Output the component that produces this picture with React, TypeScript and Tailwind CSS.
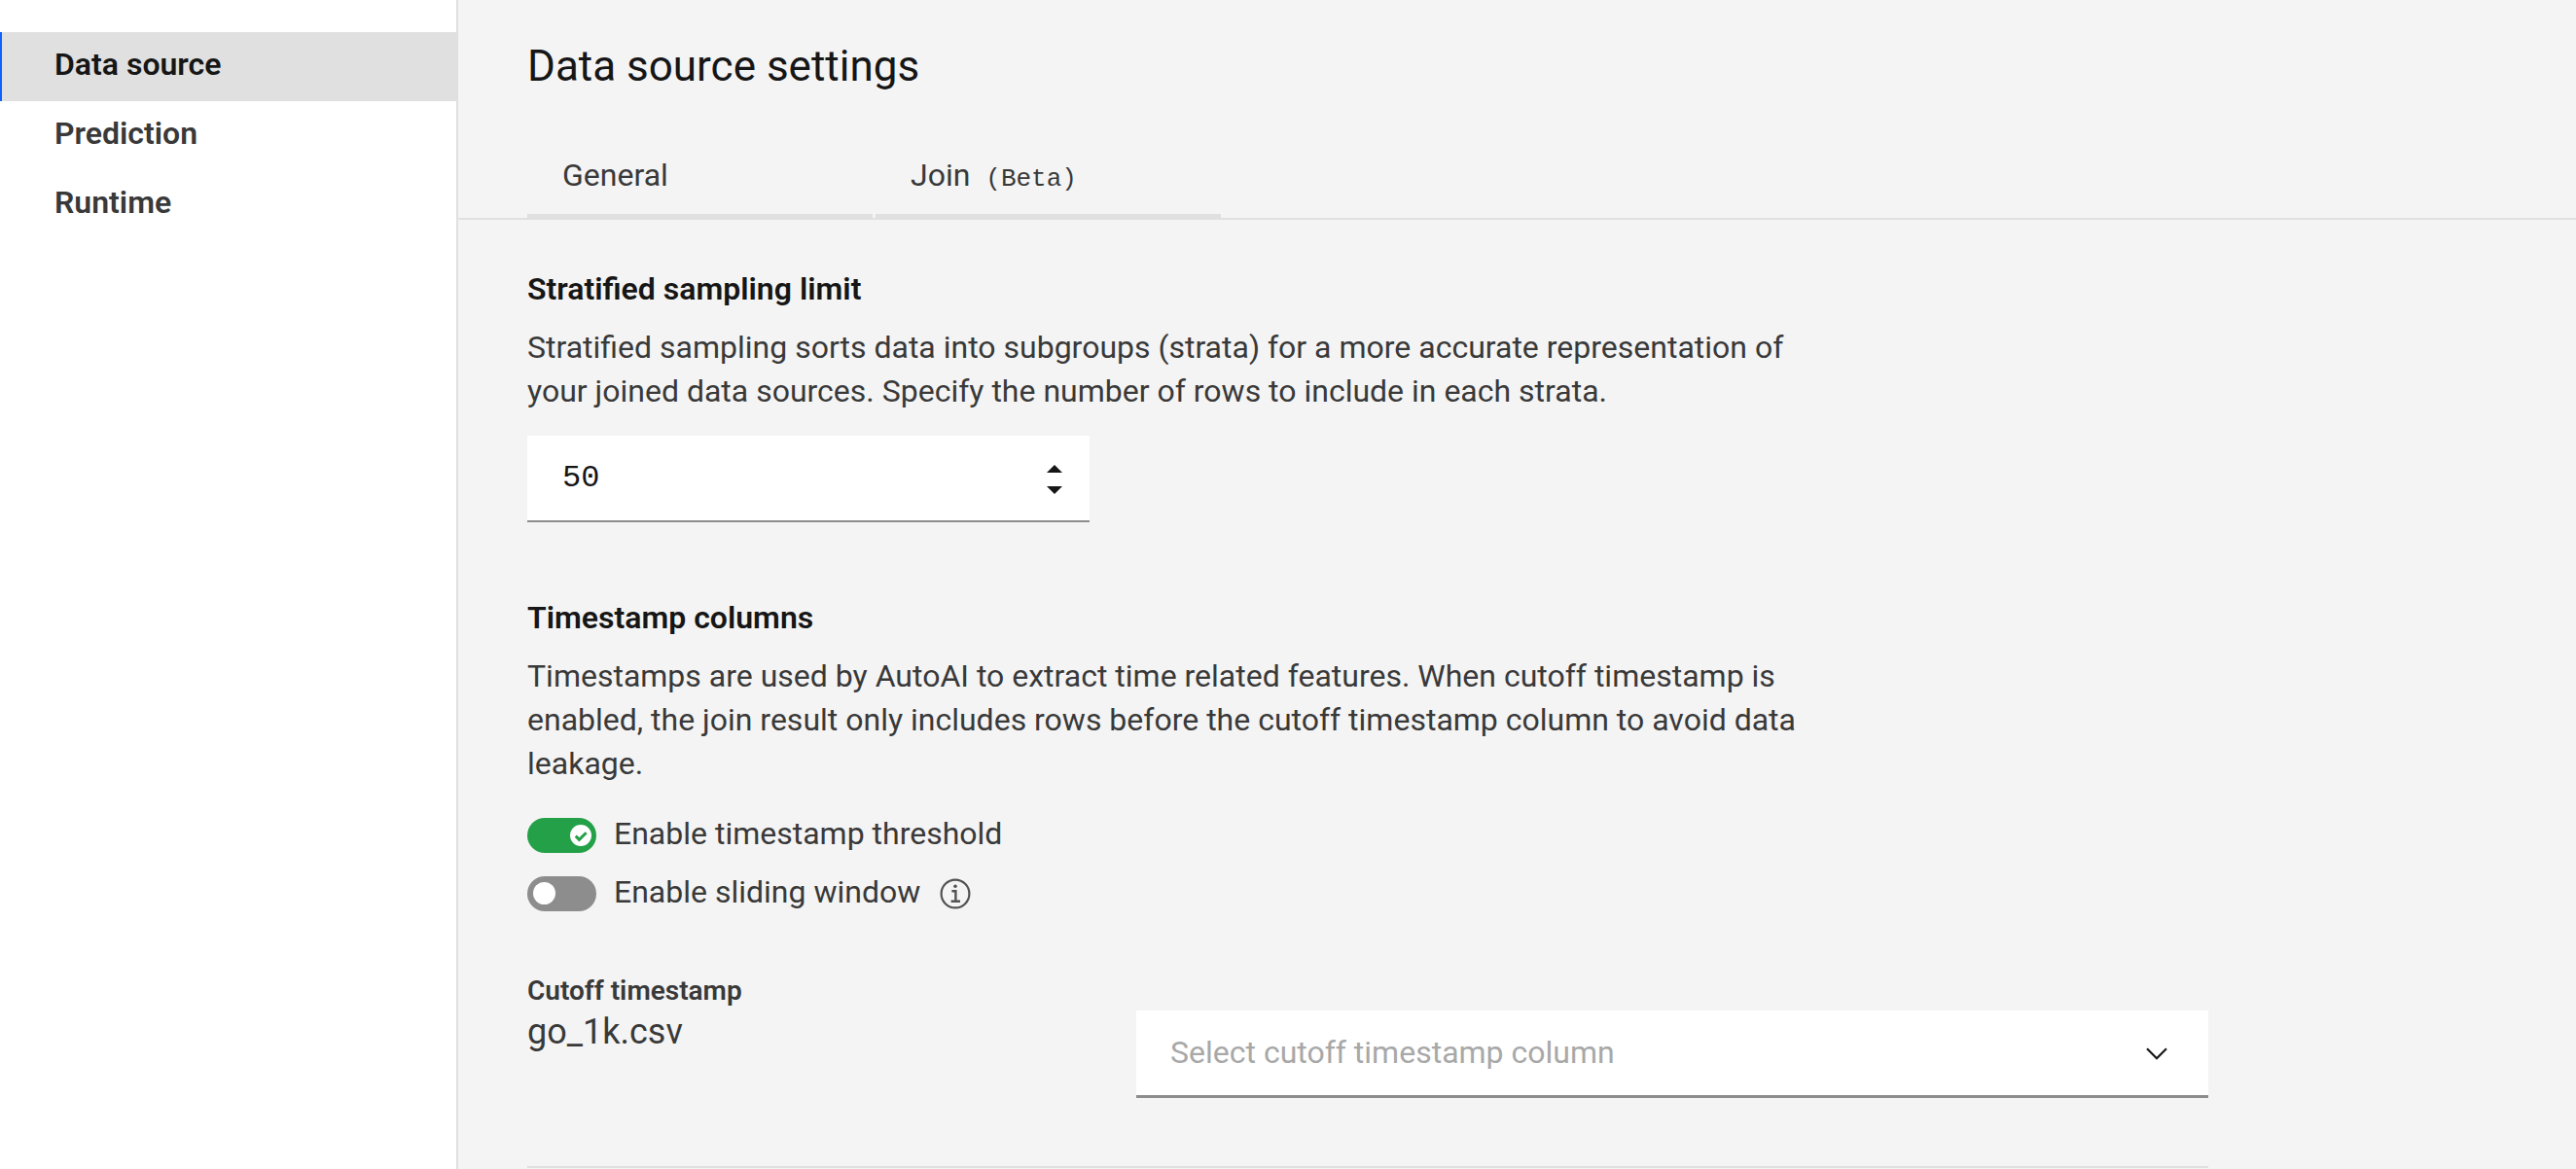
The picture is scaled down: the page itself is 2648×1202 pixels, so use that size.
import React, { useState } from 'react';
import clsx from 'clsx';

const NAV_ITEMS = ['Data source', 'Prediction', 'Runtime'];

function SideNav() {
  const [active, setActive] = useState(NAV_ITEMS[0]);
  return (
    <nav aria-label="Settings sections" className="w-[471px] shrink-0 border-r-2 border-[#e0e0e0] bg-white pt-[33px]">
      <ul>
        {NAV_ITEMS.map((item) => (
          <li key={item}>
            <button
              type="button"
              aria-current={item === active ? 'page' : undefined}
              onClick={() => setActive(item)}
              className={clsx(
                'block w-full border-l-2 pt-[13px] pb-[18px] pl-[54px] text-left text-[32px] leading-10 font-semibold',
                item === active
                  ? 'border-[#0f62fe] bg-[#e0e0e0] text-[#161616]'
                  : 'border-transparent text-[#393939]',
              )}
            >
              {item}
            </button>
          </li>
        ))}
      </ul>
    </nav>
  );
}

function Header() {
  const tab =
    'w-[355px] border-b-4 border-[#e0e0e0] pt-6 pb-5 pl-9 text-left text-[32px] leading-10 text-[#393939]';
  return (
    <header className="border-b-2 border-[#e0e0e0] pt-10 pl-[71px]">
      <h1 className="text-[44px] leading-[56px]">Data source settings</h1>
      <div role="tablist" className="mt-10 flex gap-[3px]">
        <button type="button" role="tab" className={tab}>
          General
        </button>
        <button type="button" role="tab" className={tab}>
          Join{' '}
          <span className="ml-2 font-['Liberation_Mono',monospace] text-[26px] leading-none">(Beta)</span>
        </button>
      </div>
    </header>
  );
}

function NumberField() {
  const [value, setValue] = useState(50);
  return (
    <div className="mt-[23px] flex w-[578px] items-stretch border-b-2 border-[#8d8d8d] bg-white">
      <input
        type="number"
        aria-labelledby="sampling-heading"
        value={value}
        onChange={(e) => setValue(Number(e.target.value))}
        className="h-[87px] min-w-0 flex-1 bg-transparent pl-9 font-['Liberation_Mono',monospace] text-[32px] text-[#161616] outline-none [appearance:textfield] [&::-webkit-inner-spin-button]:appearance-none"
      />
      <div className="mr-5 flex w-8 flex-col items-center justify-center gap-[14px] pt-[3px]">
        <button type="button" aria-label="Increment" onClick={() => setValue(value + 1)}>
          <svg width="16" height="8" viewBox="0 0 16 8" className="block" aria-hidden="true">
            <path d="M0 8 8 0l8 8z" fill="#161616" />
          </svg>
        </button>
        <button type="button" aria-label="Decrement" onClick={() => setValue(value - 1)}>
          <svg width="16" height="8" viewBox="0 0 16 8" className="block" aria-hidden="true">
            <path d="M0 0h16L8 8z" fill="#161616" />
          </svg>
        </button>
      </div>
    </div>
  );
}

function Toggle({ label, initial }: { label: string; initial: boolean }) {
  const [on, setOn] = useState(initial);
  return (
    <label className="flex items-start gap-[18px] text-[32px] leading-8 text-[#393939]">
      <span className="relative block h-9 w-[71px]">
        <input
          type="checkbox"
          role="switch"
          checked={on}
          onChange={() => setOn(!on)}
          className="block h-9 w-full appearance-none rounded-full bg-[#8d8d8d] checked:bg-[#24a148]"
        />
        <span
          className={clsx(
            'pointer-events-none absolute flex items-center justify-center rounded-full bg-white',
            on ? 'top-[7px] right-[5px] size-[22px]' : 'top-[6px] left-[6px] size-[23px]',
          )}
        >
          {on && (
            <svg width="22" height="22" viewBox="0 0 22 22" fill="none" aria-hidden="true">
              <path d="M5.8 11.6 9.4 15.4 16.6 8.2" stroke="#24a148" strokeWidth="3" />
            </svg>
          )}
        </span>
      </span>
      {label}
    </label>
  );
}

function InfoButton() {
  return (
    <button type="button" aria-label="More information">
      <svg width="32" height="32" viewBox="0 0 32 32" fill="none" stroke="#525252" className="block" aria-hidden="true">
        <circle cx="16" cy="16" r="14.4" strokeWidth="2.2" />
        <circle cx="16" cy="8.2" r="1.8" fill="#525252" stroke="none" />
        <path d="M12.4 13.3H16.4V23.8M11.6 23.8H21" strokeWidth="2.4" />
      </svg>
    </button>
  );
}

function CutoffRow() {
  return (
    <div className="mt-[62px] grid max-w-[1728px] grid-cols-[626px_1fr] items-start border-b-2 border-[#e0e0e0] pb-[70px] text-[#393939]">
      <label htmlFor="cutoff">
        <span className="block text-[28px] leading-10 font-semibold">Cutoff timestamp</span>
        <span className="block text-[36px] leading-[45px]">go_1k.csv</span>
      </label>
      <div className="relative mt-10">
        <select
          id="cutoff"
          defaultValue=""
          className="block h-[90px] w-full appearance-none border-b-3 border-[#8d8d8d] bg-white pr-24 pb-[2px] pl-[35px] text-[32px] text-[#a8a8a8] outline-none"
        >
          <option value="">Select cutoff timestamp column</option>
        </select>
        <svg
          width="22"
          height="13"
          viewBox="0 0 22 13"
          fill="none"
          className="pointer-events-none absolute top-[38px] right-[42px]"
          aria-hidden="true"
        >
          <path d="M1 1.2 11 11.2 21 1.2" stroke="#161616" strokeWidth="2.2" />
        </svg>
      </div>
    </div>
  );
}

export default function App() {
  const heading = 'text-[32px] leading-10 font-semibold';
  const body = 'mt-[18px] max-w-[1340px] text-[32px] leading-[45px] text-[#393939]';
  return (
    <div className="flex min-h-screen bg-[#f4f4f4] font-['Roboto',sans-serif] text-[#161616]">
      <SideNav />
      <main className="min-w-0 flex-1">
        <Header />
        <div className="pt-[51px] pr-[71px] pl-[71px]">
          <section>
            <h2 id="sampling-heading" className={heading}>Stratified sampling limit</h2>
            <p className={body}>
              Stratified sampling sorts data into subgroups (strata) for a more accurate representation of your
              joined data sources. Specify the number of rows to include in each strata.
            </p>
            <NumberField />
          </section>
          <section className="mt-[78px]">
            <h2 className={heading}>Timestamp columns</h2>
            <p className={body}>
              Timestamps are used by AutoAI to extract time related features. When cutoff timestamp is enabled,
              the join result only includes rows before the cutoff timestamp column to avoid data leakage.
            </p>
            <div className="mt-[33px] flex flex-col gap-6">
              <div className="flex">
                <Toggle label="Enable timestamp threshold" initial={true} />
              </div>
              <div className="flex items-center gap-5">
                <Toggle label="Enable sliding window" initial={false} />
                <InfoButton />
              </div>
            </div>
            <CutoffRow />
          </section>
        </div>
      </main>
    </div>
  );
}
